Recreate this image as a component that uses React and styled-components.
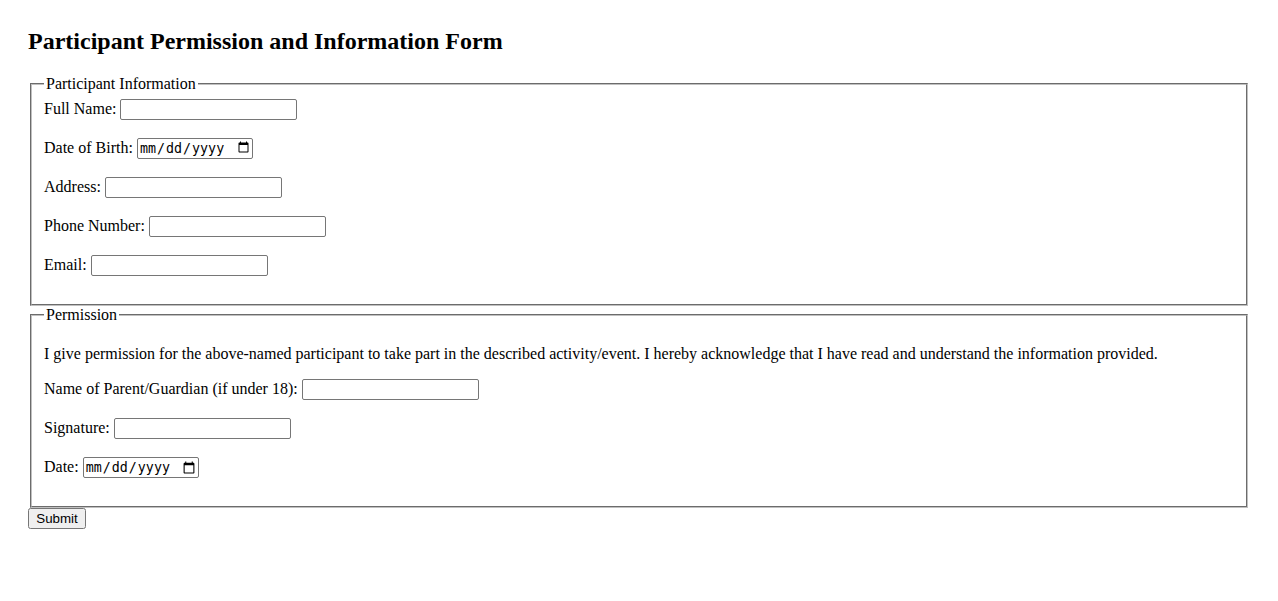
import styled, { createGlobalStyle } from "styled-components";

const GlobalStyle = createGlobalStyle`
  body {
    margin: 0;
    padding: 28px;
    font-family: "Liberation Serif", "Times New Roman", serif;
    font-size: 16px;
    color: #000;
    background: #fff;
  }
`;

const Title = styled.h2`
  font-size: 24px;
  font-weight: bold;
  margin: 0 0 20px;
`;

const Fieldset = styled.fieldset`
  margin: 0 2px;
  padding: 0.35em 0.75em 0.625em;
  border: 2px groove #c0c0c0;
`;

const Legend = styled.legend`
  padding: 0 2px;
`;

const Row = styled.div`
  margin-bottom: 18px;
`;

const Text = styled.p`
  margin: 16px 0;
`;

const Input = styled.input`
  box-sizing: border-box;
  width: ${(p) => (p.type === "date" ? "116px" : "177px")};
  height: 21px;
  font-size: 13.33px;
  border: 1px solid #767676;
  border-radius: 2px;
`;

const Button = styled.button`
  font-family: Arial, "Liberation Sans", sans-serif;
  font-size: 13.33px;
  width: 58px;
  height: 21px;
`;

const Field = ({ id, label, type = "text" }) => (
  <Row>
    <label htmlFor={id}>{label}:</label> <Input type={type} id={id} />
  </Row>
);

const App = () => {
  return (
    <>
      <GlobalStyle />
      <Title>Participant Permission and Information Form</Title>
      <form onSubmit={(e) => e.preventDefault()}>
        <Fieldset>
          <Legend>Participant Information</Legend>
          <Field id="name" label="Full Name" />
          <Field id="dob" label="Date of Birth" type="date" />
          <Field id="address" label="Address" />
          <Field id="phone" label="Phone Number" type="tel" />
          <Field id="email" label="Email" type="email" />
        </Fieldset>
        <Fieldset>
          <Legend>Permission</Legend>
          <Text>
            I give permission for the above-named participant to take part in
            the described activity/event. I hereby acknowledge that I have read
            and understand the information provided.
          </Text>
          <Field id="guardian" label="Name of Parent/Guardian (if under 18)" />
          <Field id="signature" label="Signature" />
          <Field id="date" label="Date" type="date" />
        </Fieldset>
        <Button type="submit">Submit</Button>
      </form>
    </>
  );
};

export default App;
